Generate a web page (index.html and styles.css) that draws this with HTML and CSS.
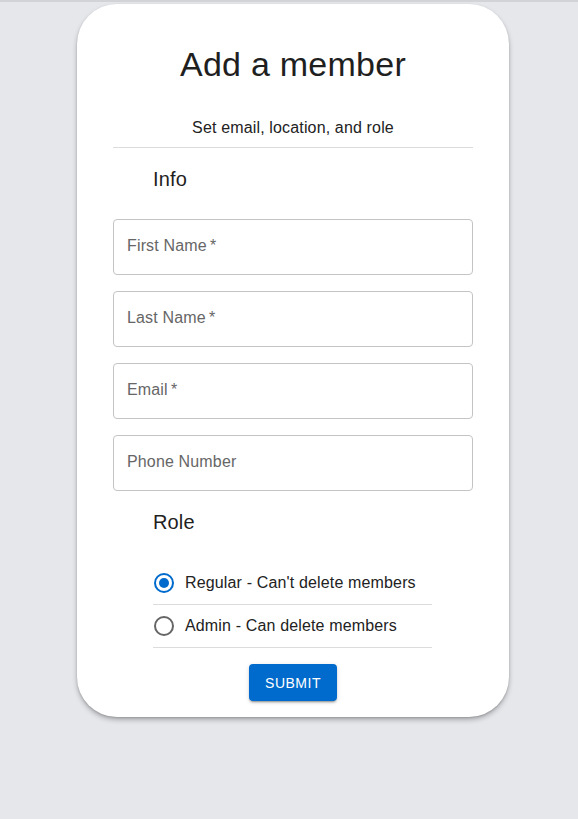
FILE: index.html
```html
<!DOCTYPE html>
<html lang="en">
<head>
<meta charset="utf-8">
<title>Add a member</title>
<link rel="stylesheet" href="styles.css">
</head>
<body>
<div class="page">
  <form class="card">
    <h1 class="title">Add a member</h1>
    <p class="subtitle">Set email, location, and role</p>
    <hr class="divider">
    <h2 class="section">Info</h2>
    <div class="fields">
      <label class="field"><span class="label">First Name<span class="req">&thinsp;*</span></span></label>
      <label class="field"><span class="label">Last Name<span class="req">&thinsp;*</span></span></label>
      <label class="field"><span class="label">Email<span class="req">&thinsp;*</span></span></label>
      <label class="field"><span class="label">Phone Number</span></label>
    </div>
    <h2 class="section role-title">Role</h2>
    <ul class="roles">
      <li class="role">
        <span class="radio checked"><span class="dot"></span></span>
        <span class="role-text">Regular - Can't delete members</span>
      </li>
      <li class="role">
        <span class="radio"></span>
        <span class="role-text">Admin - Can delete members</span>
      </li>
    </ul>
    <div class="actions">
      <button type="button" class="submit">Submit</button>
    </div>
  </form>
</div>
</body>
</html>
```

FILE: styles.css
```css
* { box-sizing: border-box; }
html, body { margin: 0; padding: 0; }
body {
  background: #e5e7eb;
  border-top: 2px solid #d2d3d6;
  min-height: 819px;
  font-family: "Liberation Sans", Arial, Helvetica, sans-serif;
  color: #222;
}
.page {
  display: flex;
  justify-content: center;
  padding: 2px 0 0 8px;
}
.card {
  width: 432px;
  background: #fff;
  border-radius: 40px;
  padding: 40px 36px 16px;
  box-shadow: 0 3px 5px rgba(0,0,0,0.25), 0 1px 2px rgba(0,0,0,0.15);
}
.title {
  margin: 0;
  text-align: center;
  font-size: 34px;
  line-height: 40px;
  font-weight: 400;
  letter-spacing: 0.25px;
  color: #1f1f1f;
}
.subtitle {
  margin: 32px 0 0;
  text-align: center;
  font-size: 16px;
  line-height: 24px;
  letter-spacing: 0.15px;
  color: #222;
}
.divider {
  margin: 7px 0 0;
  border: 0;
  border-top: 1px solid #dcdcdc;
}
.section {
  margin: 17px 0 0 40px;
  font-size: 20px;
  line-height: 28px;
  font-weight: 400;
  letter-spacing: 0.15px;
  color: #1f1f1f;
}
.fields {
  display: flex;
  flex-direction: column;
  gap: 16px;
  margin-top: 26px;
}
.field {
  display: flex;
  align-items: center;
  height: 56px;
  border: 1px solid #c4c4c4;
  border-radius: 4px;
  padding: 0 13px 2px;
}
.label {
  font-size: 16px;
  color: #666;
  letter-spacing: 0.15px;
}
.role-title { margin-top: 17px; }
.roles {
  list-style: none;
  margin: 26px 0 0 40px;
  padding: 0;
  width: 279px;
}
.role {
  display: flex;
  align-items: center;
  gap: 11px;
  height: 43px;
  border-bottom: 1px solid #dcdcdc;
  font-size: 16px;
  letter-spacing: 0.15px;
  color: #222;
}
.radio {
  width: 20px;
  height: 20px;
  margin-left: 1px;
  border: 2px solid #666;
  border-radius: 50%;
  display: flex;
  align-items: center;
  justify-content: center;
  flex: none;
}
.radio.checked { border-color: #006bcc; }
.dot {
  width: 10px;
  height: 10px;
  border-radius: 50%;
  background: #006bcc;
}
.actions {
  display: flex;
  justify-content: center;
  margin-top: 16px;
}
.submit {
  width: 88px;
  height: 37px;
  border: 0;
  border-radius: 4px;
  background: #006bcc;
  color: #fff;
  font-family: inherit;
  font-size: 14px;
  font-weight: 400;
  letter-spacing: 0.5px;
  text-transform: uppercase;
  box-shadow: 0 3px 1px -2px rgba(0,0,0,0.2), 0 2px 2px rgba(0,0,0,0.14), 0 1px 5px rgba(0,0,0,0.12);
}
```
